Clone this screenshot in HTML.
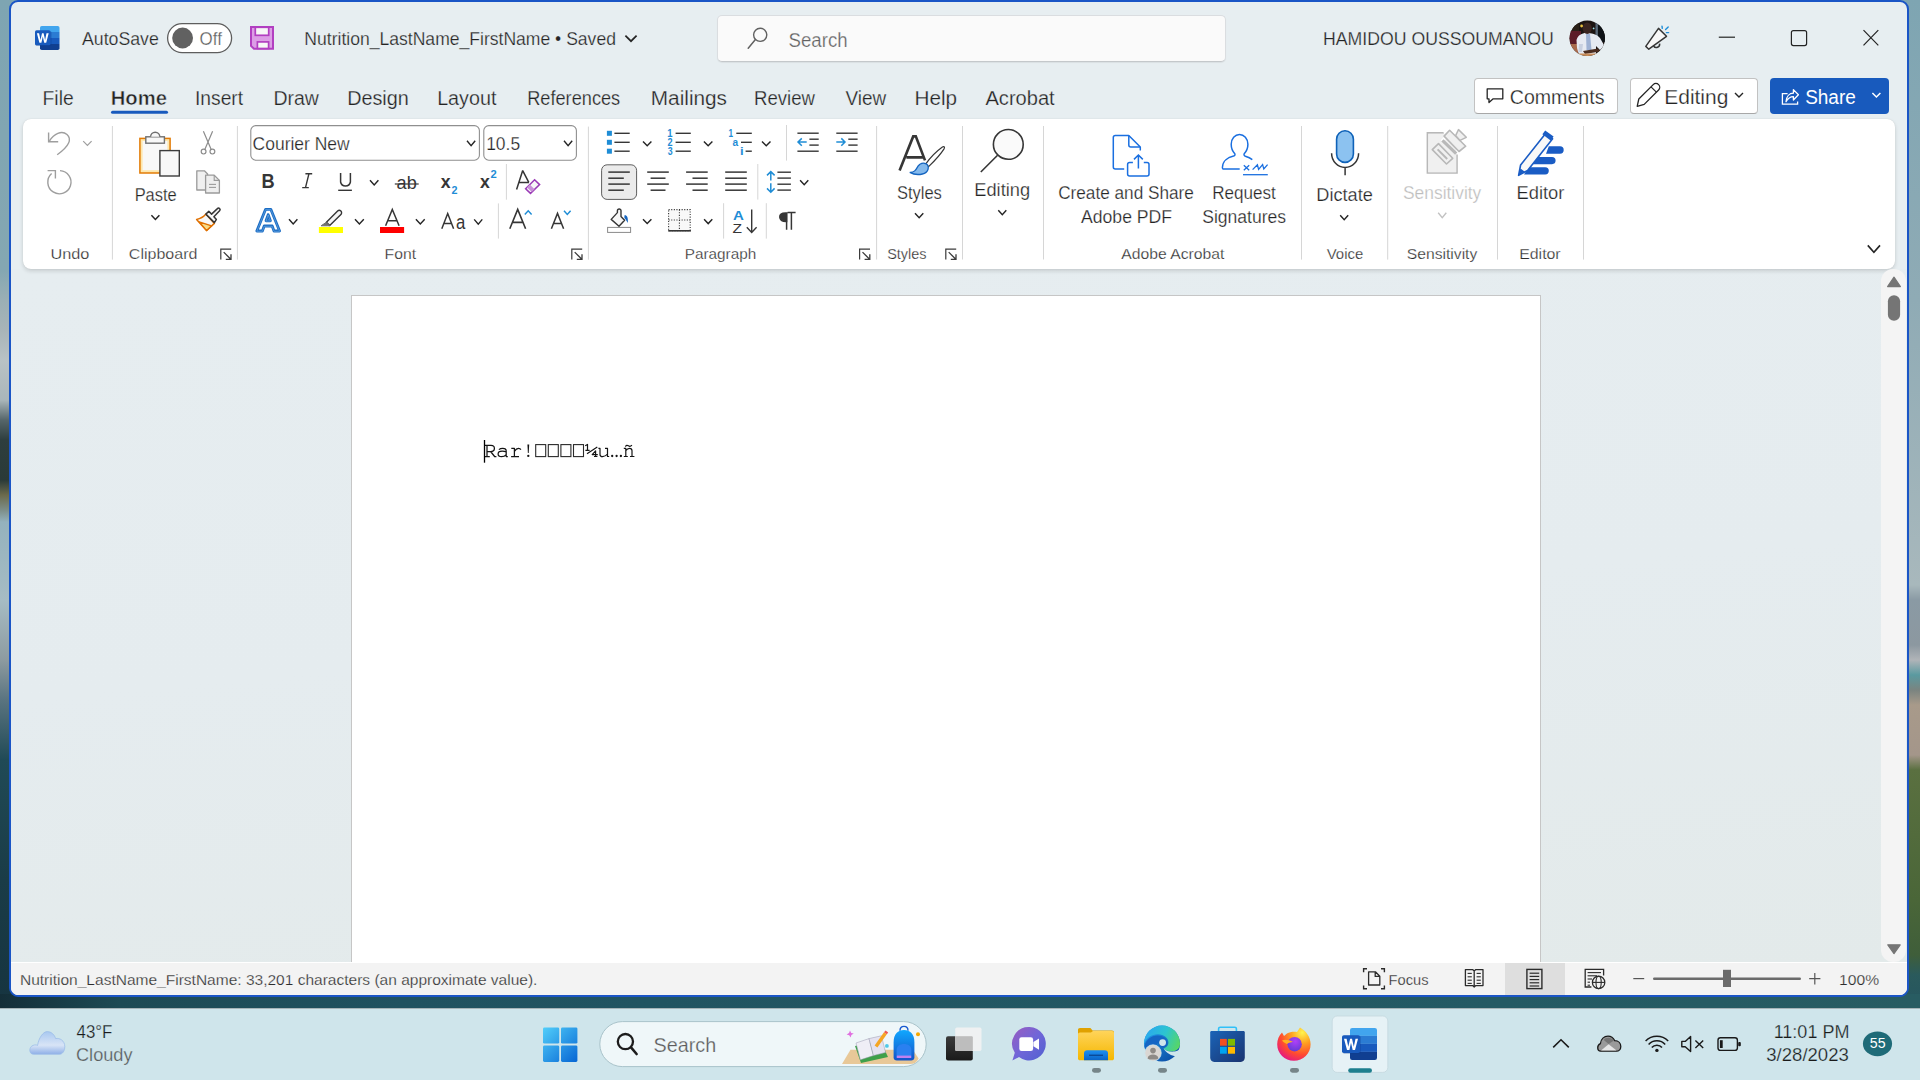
<!DOCTYPE html>
<html><head><meta charset="utf-8"><title>Word</title>
<style>
html,body{margin:0;padding:0;}
body{width:1920px;height:1080px;overflow:hidden;position:relative;font-family:"Liberation Sans",sans-serif;background:#1f4a55;}
svg text{white-space:pre;}
</style></head><body>
<div style="position:absolute;left:0;top:0;width:1920px;height:1008px;background:#7fa6b3"></div>
<div style="position:absolute;left:0;top:0;width:12px;height:1008px;background:linear-gradient(180deg,#7ea5b2 0px,#84a7b2 270px,#9aafb5 300px,#a8b4b8 330px,#b8c2c5 360px,#aab6ba 400px,#56666a 420px,#2e3e3e 440px,#2a3a38 480px,#6b6a4c 495px,#7d8e88 510px,#94b2bd 522px,#a6bcc4 600px,#8d9ba0 660px,#5a7480 700px,#204a56 760px,#1a3c47 880px,#163440 1008px)"></div>
<div style="position:absolute;left:1906px;top:0;width:14px;height:1008px;background:linear-gradient(180deg,#7ea5b2 0px,#8fabb5 300px,#a8b8bc 585px,#8a9aa4 600px,#8c98a0 645px,#b0b4b8 660px,#5a9aa0 675px,#7a8480 690px,#a89a8a 705px,#a4968a 755px,#5a7040 770px,#4a6638 900px,#3f5e3a 955px,#2a5a5c 975px,#255560 1008px)"></div>
<div style="position:absolute;left:0;top:994px;width:1920px;height:14px;background:linear-gradient(90deg,#142e38 0px,#1d4a54 120px,#205260 400px,#225662 900px,#245a64 1500px,#285c62 1920px)"></div>
<div style="position:absolute;left:9px;top:0px;width:1896px;height:993px;border:2px solid #1a55c6;border-radius:9px;background:#e7eef1;overflow:hidden"></div>
<div style="position:absolute;left:11px;top:269px;width:1896px;height:694px;background:linear-gradient(175deg,#e6edf0 0%,#e5ecef 50%,#e3eaea 100%)"></div>
<div style="position:absolute;left:11px;top:962px;width:1896px;height:33px;background:#f3f3f3;border-radius:0 0 8px 8px"></div>
<div style="position:absolute;left:717px;top:15px;width:507px;height:45px;background:#fafafa;border:1px solid #dadde0;border-bottom-color:#c4c8cb;border-radius:5px;box-shadow:0 1px 1px rgba(0,0,0,0.06)"></div>
<div style="position:absolute;left:23px;top:119px;width:1872px;height:150px;background:#ffffff;border-radius:8px;box-shadow:0 2px 4px rgba(0,0,0,0.14),0 0 1px rgba(0,0,0,0.12)"></div>
<div style="position:absolute;left:1474px;top:78px;width:142px;height:34px;background:#ffffff;border:1px solid #c2c2c2;border-bottom-color:#a8a8a8;border-radius:4px"></div>
<div style="position:absolute;left:1630px;top:78px;width:126px;height:34px;background:#ffffff;border:1px solid #c2c2c2;border-bottom-color:#a8a8a8;border-radius:4px"></div>
<div style="position:absolute;left:1770px;top:78px;width:119px;height:36px;background:#185abd;border-radius:4px"></div>
<div style="position:absolute;left:1881px;top:269px;width:25px;height:693px;background:#f4f4f4;border-radius:12px"></div>
<div style="position:absolute;left:351px;top:295px;width:1188px;height:667px;background:#ffffff;border:1px solid #c6c6c6;border-bottom:none"></div>
<div style="position:absolute;left:11px;top:962px;width:1896px;height:33px;background:#f3f3f3;border-top:1px solid #ffffff;box-sizing:border-box;border-radius:0 0 8px 8px"></div>
<div style="position:absolute;left:1505px;top:963px;width:60px;height:32px;background:#dedede"></div>
<div style="position:absolute;left:0;top:1008px;width:1920px;height:72px;background:#cfe5eb;border-top:1px solid #a6b4b8;box-sizing:border-box"></div>
<svg width="1920" height="1080" viewBox="0 0 1920 1080" style="position:absolute;left:0;top:0">
<rect x="111" y="110.8" width="57" height="3" rx="1.5" fill="#185abd"/>
<defs><clipPath id="wc1"><rect x="40" y="26" width="19.5" height="24" rx="1.8"/></clipPath></defs>
<g clip-path="url(#wc1)"><rect x="40" y="26" width="20" height="6" fill="#41a5ee"/><rect x="40" y="32" width="20" height="6" fill="#2b7cd3"/><rect x="40" y="38" width="20" height="6" fill="#185abd"/><rect x="40" y="44" width="20" height="6" fill="#103f91"/></g>
<rect x="35.5" y="31" width="16" height="15" rx="1.6" fill="#0b3a8c" opacity="0.35"/>
<rect x="35" y="30.3" width="15.5" height="15" rx="1.6" fill="#185abd"/>
<path d="M36.9,33.2 H39.1 L40.5,40 L42,33.2 H43.6 L45.1,40 L46.5,33.2 H48.7 L46.2,42.8 H44.2 L42.8,36.6 L41.4,42.8 H39.4 Z" fill="#fff"/>
<rect x="167.6" y="23.6" width="64" height="29" rx="14.5" fill="#ffffff" stroke="#5e5e5e" stroke-width="1.3"/>
<circle cx="182.6" cy="38" r="10.4" fill="#616161"/>
<path d="M250,26 H274 V49.8 H253.6 L250,46.2 Z" fill="#b23fc1"/>
<path d="M252,28 H272 V47.8 H254.4 L252,45.4 Z" fill="#dc9de6"/>
<rect x="255.3" y="27.3" width="13.4" height="8" fill="#f7f7f7" stroke="#b23fc1" stroke-width="1.7"/>
<rect x="257.4" y="41.9" width="11.2" height="6.6" fill="#f7f7f7" stroke="#b23fc1" stroke-width="1.7"/>
<polyline points="625.4,35.6 631,41.2 636.6,35.6" fill="none" stroke="#242424" stroke-width="1.7"/>
<circle cx="760.2" cy="34.8" r="6.6" fill="none" stroke="#616161" stroke-width="1.4"/><line x1="755.4" y1="39.6" x2="748.2" y2="48.2" stroke="#616161" stroke-width="1.5" stroke-linecap="round"/>
<defs><clipPath id="av"><circle cx="1587.3" cy="38.3" r="17.7"/></clipPath></defs>
<g clip-path="url(#av)"><rect x="1569" y="20" width="37" height="37" fill="#1c1412"/>
<rect x="1569" y="20" width="10" height="12" fill="#2a2018"/>
<rect x="1569" y="31" width="12" height="13" fill="#5c1c28"/>
<rect x="1569" y="44" width="9" height="13" fill="#a86a4c"/>
<rect x="1595.5" y="22" width="2.4" height="16" fill="#5a6878"/>
<rect x="1598" y="20" width="8" height="22" fill="#0e1216"/>
<path d="M1576.5,40 C1578,35 1582,33 1586,33 C1591,33 1597,34 1600,38 L1604.5,46 L1600,50 L1596,46 L1596,54 L1579,55 L1577,48 Z" fill="#e6eaf2"/>
<path d="M1586,34 L1590,34 L1591.5,50 L1586.5,50 Z" fill="#9fb2d4"/>
<path d="M1579,44 L1583,44 L1582,52 L1578.5,52 Z" fill="#c8d0e0"/>
<ellipse cx="1587.2" cy="28.2" rx="4.6" ry="5.8" fill="#3a2420"/>
<path d="M1583,51 L1598,48.5 L1600,51.5 L1585,54 Z" fill="#4a2c20"/>
<rect x="1569" y="53.5" width="37" height="4" fill="#c88c5a"/>
<circle cx="1581.6" cy="26" r="1.4" fill="#e8c040"/>
<circle cx="1593.6" cy="28.4" r="0.9" fill="#a0e0e8"/></g>
<path d="M1645.8,46.4 L1658.5,28.4 L1666.5,36.3 L1648.8,49.2 Z" fill="#f8f8f8" stroke="#363636" stroke-width="1.5" stroke-linejoin="round"/>
<path d="M1653.6,46 A3.3,3.3 0 0 0 1659.6,43.6" fill="none" stroke="#363636" stroke-width="1.5"/>
<line x1="1662" y1="26.2" x2="1662.3" y2="28.4" stroke="#1f8ed8" stroke-width="1.4" stroke-linecap="round"/>
<line x1="1665.6" y1="29.6" x2="1668.2" y2="27" stroke="#1f8ed8" stroke-width="1.4" stroke-linecap="round"/>
<line x1="1666.4" y1="32.6" x2="1668.6" y2="32.6" stroke="#1f8ed8" stroke-width="1.4" stroke-linecap="round"/>
<line x1="1718.8" y1="37.2" x2="1735" y2="37.2" stroke="#242424" stroke-width="1.2"/>
<rect x="1791.4" y="30.6" width="15.2" height="15" rx="2" fill="none" stroke="#242424" stroke-width="1.2"/>
<path d="M1863.5,30.2 L1878.3,45.4 M1878.3,30.2 L1863.5,45.4" stroke="#242424" stroke-width="1.2"/>
<path d="M1487.2,88.8 H1502.8 V98.8 H1493.2 L1489,102.6 V98.8 H1487.2 Z" fill="none" stroke="#242424" stroke-width="1.3" stroke-linejoin="round"/>
<path d="M1637.2,106.4 L1638.8,99 L1653.2,84.6 A2.6,2.6 0 0 1 1658.6,90 L1644.2,104.4 Z" fill="none" stroke="#242424" stroke-width="1.3" stroke-linejoin="round"/>
<line x1="1651" y1="86.8" x2="1656.4" y2="92.2" stroke="#242424" stroke-width="1.2"/>
<polyline points="1735,93 1739,97 1743,93" fill="none" stroke="#242424" stroke-width="1.4"/>
<path d="M1786,101.8 C1786.4,96.2 1789.6,93.2 1793.4,93.2 V89.6 L1798.4,94.8 L1793.4,100 V96.6 C1790.4,96.6 1787.8,98.4 1786,101.8 Z" fill="none" stroke="#fff" stroke-width="1.3" stroke-linejoin="round"/>
<path d="M1787.6,93.6 H1782.4 V104.2 H1797.6 V101.4" fill="none" stroke="#fff" stroke-width="1.3"/>
<polyline points="1872.4,93 1876.4,97 1880.4,93" fill="none" stroke="#fff" stroke-width="1.5"/>
<path d="M48.6,132.4 V141.8 H58.2" fill="none" stroke="#9e9e9e" stroke-width="1.4"/>
<path d="M49.4,141 C54,134 61.5,130 67,134.5 C72,139 69.5,146 57.2,154.8" fill="none" stroke="#9e9e9e" stroke-width="1.4"/>
<polyline points="83.2,141.2 87.4,145.4 91.6,141.2" fill="none" stroke="#9e9e9e" stroke-width="1.2"/>
<path d="M51.6,173.6 A11.6,11.6 0 1 0 60,170.6" fill="none" stroke="#9e9e9e" stroke-width="1.4"/>
<path d="M47.6,170.6 H55.4 V178.4" fill="none" stroke="#9e9e9e" stroke-width="1.4"/>
<line x1="112.4" y1="126" x2="112.4" y2="259.6" stroke="#d6d6d6" stroke-width="1"/>
<line x1="237.4" y1="126" x2="237.4" y2="259.6" stroke="#d6d6d6" stroke-width="1"/>
<line x1="588.4" y1="126.6" x2="588.4" y2="259.7" stroke="#d6d6d6" stroke-width="1"/>
<line x1="876.6" y1="126" x2="876.6" y2="259.5" stroke="#d6d6d6" stroke-width="1"/>
<line x1="962.5" y1="126" x2="962.5" y2="259.5" stroke="#d6d6d6" stroke-width="1"/>
<line x1="1043.5" y1="126" x2="1043.5" y2="259.5" stroke="#d6d6d6" stroke-width="1"/>
<line x1="1301.5" y1="126" x2="1301.5" y2="259.6" stroke="#d6d6d6" stroke-width="1"/>
<line x1="1387.7" y1="126" x2="1387.7" y2="259.6" stroke="#d6d6d6" stroke-width="1"/>
<line x1="1497.5" y1="126" x2="1497.5" y2="259.6" stroke="#d6d6d6" stroke-width="1"/>
<line x1="1583.5" y1="126" x2="1583.5" y2="259.6" stroke="#d6d6d6" stroke-width="1"/>
<rect x="139.9" y="138.4" width="30.2" height="34.6" fill="#fde7ad" stroke="#e27b06" stroke-width="1.5"/>
<rect x="142.6" y="141" width="24.8" height="29.2" fill="#f8f8f8"/>
<rect x="145.8" y="136.8" width="18.6" height="6.4" fill="#f8f8f8" stroke="#707070" stroke-width="1.4"/>
<path d="M150.6,136.8 A4.6,4.6 0 0 1 159.8,136.8" fill="#f8f8f8" stroke="#707070" stroke-width="1.4"/>
<rect x="159.9" y="150.6" width="19.4" height="25.4" fill="#f8f8f8" stroke="#3c3c3c" stroke-width="1.4"/>
<polyline points="151.4,215.2 155.4,219.4 159.4,215.2" fill="none" stroke="#242424" stroke-width="1.5"/>
<path d="M203.4,131.2 L211.4,150 M212.6,131.2 L204.6,150" fill="none" stroke="#8c8c8c" stroke-width="1.2"/>
<circle cx="203.6" cy="151.6" r="2.4" fill="none" stroke="#8c8c8c" stroke-width="1.2"/>
<circle cx="212.4" cy="151.6" r="2.4" fill="none" stroke="#8c8c8c" stroke-width="1.2"/>
<path d="M196.8,190 V170.8 H204.4 L207.6,174 V190 Z" fill="#f0f0f0" stroke="#9a9a9a" stroke-width="1.3" stroke-linejoin="round"/>
<path d="M205.6,193 V175.2 H214.2 L219.4,180.4 V193 Z" fill="#eeeeee" stroke="#9a9a9a" stroke-width="1.3" stroke-linejoin="round"/>
<path d="M214.2,175.2 V180.4 H219.4" fill="none" stroke="#9a9a9a" stroke-width="1.1"/>
<line x1="209" y1="184.4" x2="216" y2="184.4" stroke="#9a9a9a" stroke-width="1.1"/><line x1="209" y1="187.4" x2="216" y2="187.4" stroke="#9a9a9a" stroke-width="1.1"/>
<path d="M205.9,214.1 C203.5,217 200.5,218.8 196.6,219.4 L206.5,230.6 L214.4,223.4 Z" fill="#f8f8f8" stroke="#e07000" stroke-width="1.5" stroke-linejoin="round"/>
<path d="M199.2,221.8 L211.6,225.8 L206.5,230.4 Z" fill="#f8dc88" stroke="#e07000" stroke-width="1.3" stroke-linejoin="round"/>
<path d="M205.9,214.1 L208.8,211.3 L211.6,214.1 L217.4,208.6 A1.3,1.3 0 0 1 219.6,210.8 L213.9,216.7 L216.4,219.4 L214.4,222.6 Z" fill="#f8f8f8" stroke="#363636" stroke-width="1.5" stroke-linejoin="round"/>
<path d="M220.79999999999998,259.6 V249.2 H231.2" fill="none" stroke="#3b3b3b" stroke-width="1.2"/><path d="M223.7,252.1 L230.79999999999998,259.2 M231.0,254.2 V259.4 H225.79999999999998" fill="none" stroke="#3b3b3b" stroke-width="1.3"/>
<path d="M571.8000000000001,259.6 V249.2 H582.2" fill="none" stroke="#3b3b3b" stroke-width="1.2"/><path d="M574.7,252.1 L581.8000000000001,259.2 M582.0,254.2 V259.4 H576.8000000000001" fill="none" stroke="#3b3b3b" stroke-width="1.3"/>
<path d="M859.6,259.6 V249.2 H870" fill="none" stroke="#3b3b3b" stroke-width="1.2"/><path d="M862.5,252.1 L869.6,259.2 M869.8,254.2 V259.4 H864.6" fill="none" stroke="#3b3b3b" stroke-width="1.3"/>
<path d="M945.8000000000001,259.6 V249.2 H956.2" fill="none" stroke="#3b3b3b" stroke-width="1.2"/><path d="M948.7,252.1 L955.8000000000001,259.2 M956.0,254.2 V259.4 H950.8000000000001" fill="none" stroke="#3b3b3b" stroke-width="1.3"/>
<rect x="250.8" y="125.6" width="228.6" height="34.6" rx="5" fill="#fff" stroke="#8f8f8f" stroke-width="1.1"/>
<rect x="483.8" y="125.6" width="92.6" height="34.6" rx="5" fill="#fff" stroke="#8f8f8f" stroke-width="1.1"/>
<polyline points="467,140.8 471.1,145.6 475.2,140.8" fill="none" stroke="#242424" stroke-width="1.4"/>
<polyline points="564,140.8 568.1,145.6 572.2,140.8" fill="none" stroke="#242424" stroke-width="1.4"/>
<path d="M305.4,173.8 H312.2 M302.2,187.6 H308.8 M308.9,173.8 L305.5,187.6" fill="none" stroke="#363636" stroke-width="1.4"/>
<path d="M340.6,173 V182 A5,5 0 0 0 350.4,182 V173" fill="none" stroke="#363636" stroke-width="1.5"/><line x1="338.2" y1="190.3" x2="351.9" y2="190.3" stroke="#363636" stroke-width="1.4"/>
<polyline points="370,180.2 374.2,185 378.4,180.2" fill="none" stroke="#242424" stroke-width="1.4"/>
<line x1="394.8" y1="184" x2="418.7" y2="184" stroke="#363636" stroke-width="1.2"/>
<path d="M516.6,189.6 L522.7,170.6 L528.8,182.4 M519.4,182.4 H529" fill="none" stroke="#363636" stroke-width="1.5" stroke-linejoin="bevel"/>
<path d="M525.6,188.8 L534.6,179.8 L539.6,184.6 L530.5,193.4 Z" fill="#f6f6f6" stroke="#9a3ab6" stroke-width="1.5"/><path d="M527,187.4 L531.8,192 L534.6,189.2 L529.8,184.6 Z" fill="#c890d8"/>
<path d="M256.8,231 L265.6,209.3 H270.8 L279.6,231 H274 L272.2,226 H264.2 L262.4,231 Z M266,220.8 H270.4 L268.2,214.6 Z" fill="#ffffff" stroke="#1a6cc4" stroke-width="2.8" stroke-linejoin="round"/>
<path d="M256.8,231 L265.6,209.3 H270.8 L279.6,231 H274 L272.2,226 H264.2 L262.4,231 Z M266,220.8 H270.4 L268.2,214.6 Z" fill="none" stroke="#8cc0ee" stroke-width="0.6" opacity="0.8" transform="translate(0,0.3)"/>
<polyline points="289,219.2 293.2,224 297.4,219.2" fill="none" stroke="#242424" stroke-width="1.4"/>
<rect x="318.9" y="227" width="24.1" height="6" fill="#ffff00"/>
<path d="M326.4,222.3 L337.6,211.1 A2.1,2.1 0 0 1 340.9,214.4 L329.7,225.6 Z" fill="#f6f6f6" stroke="#363636" stroke-width="1.4" stroke-linejoin="round"/>
<path d="M326.2,222.4 L329.6,225.8 L327.4,225.8 L321,225.8 Z" fill="#707070" stroke="#707070" stroke-width="1"/>
<polyline points="355,219.2 359.4,224 363.8,219.2" fill="none" stroke="#242424" stroke-width="1.4"/>
<path d="M385.6,225.7 L392.3,209.4 L399.1,225.7 M387.6,220.8 H397" fill="none" stroke="#363636" stroke-width="1.5"/>
<rect x="380" y="227" width="24.1" height="6" fill="#ff0000"/>
<polyline points="415.9,219.2 420.29999999999995,224 424.7,219.2" fill="none" stroke="#242424" stroke-width="1.4"/>
<path d="M441.8,228.8 L447.7,213.6 L453.6,228.8 M443.8,223.6 H451.6" fill="none" stroke="#363636" stroke-width="1.5"/>
<polyline points="474.2,219.4 478.25,224.2 482.3,219.4" fill="none" stroke="#242424" stroke-width="1.4"/>
<path d="M509.8,228.8 L517.7,209.4 L525.6,228.8 M512.4,222.4 H523" fill="none" stroke="#363636" stroke-width="1.6"/>
<polyline points="524.8,214.4 528.2,210.8 531.6,214.4" fill="none" stroke="#1f8dd6" stroke-width="1.5"/>
<path d="M551.4,228.8 L557.5,213.4 L563.6,228.8 M553.4,223.6 H561.6" fill="none" stroke="#363636" stroke-width="1.5"/>
<polyline points="564,210.8 567.3,214.4 570.6,210.8" fill="none" stroke="#1f8dd6" stroke-width="1.5"/>
<line x1="506.4" y1="164" x2="506.4" y2="199.7" stroke="#d6d6d6" stroke-width="1"/>
<line x1="498.4" y1="203.4" x2="498.4" y2="238.6" stroke="#d6d6d6" stroke-width="1"/>
<line x1="786.5" y1="125" x2="786.5" y2="160.6" stroke="#d6d6d6" stroke-width="1"/>
<line x1="757.8" y1="164" x2="757.8" y2="199.6" stroke="#d6d6d6" stroke-width="1"/>
<line x1="723.6" y1="203.2" x2="723.6" y2="238.6" stroke="#d6d6d6" stroke-width="1"/>
<line x1="766.3" y1="203.2" x2="766.3" y2="238.6" stroke="#d6d6d6" stroke-width="1"/>
<rect x="606.9" y="130.8" width="5" height="5" fill="#1f8dd6"/><line x1="614.4" y1="133.3" x2="629.7" y2="133.3" stroke="#363636" stroke-width="1.4"/>
<line x1="675.6" y1="133.3" x2="690.8" y2="133.3" stroke="#363636" stroke-width="1.4"/>
<rect x="606.9" y="139.8" width="5" height="5" fill="#1f8dd6"/><line x1="614.4" y1="142.3" x2="629.7" y2="142.3" stroke="#363636" stroke-width="1.4"/>
<line x1="675.6" y1="142.3" x2="690.8" y2="142.3" stroke="#363636" stroke-width="1.4"/>
<rect x="606.9" y="148.7" width="5" height="5" fill="#1f8dd6"/><line x1="614.4" y1="151.2" x2="629.7" y2="151.2" stroke="#363636" stroke-width="1.4"/>
<line x1="675.6" y1="151.2" x2="690.8" y2="151.2" stroke="#363636" stroke-width="1.4"/>
<polyline points="643,141.4 647.2,145.8 651.4,141.4" fill="none" stroke="#242424" stroke-width="1.4"/>
<polyline points="703.9,141.4 708.15,145.8 712.4,141.4" fill="none" stroke="#242424" stroke-width="1.4"/>
<line x1="736.3" y1="133.3" x2="751.8" y2="133.3" stroke="#363636" stroke-width="1.4"/><line x1="741" y1="142.3" x2="751.8" y2="142.3" stroke="#363636" stroke-width="1.4"/><line x1="745.6" y1="151.2" x2="751.8" y2="151.2" stroke="#363636" stroke-width="1.4"/>
<polyline points="762,141.4 766.25,145.8 770.5,141.4" fill="none" stroke="#242424" stroke-width="1.4"/>
<line x1="797.4" y1="133.2" x2="818.6999999999999" y2="133.2" stroke="#363636" stroke-width="1.4"/><line x1="797.4" y1="151.2" x2="818.6999999999999" y2="151.2" stroke="#363636" stroke-width="1.4"/>
<line x1="809.4" y1="139.2" x2="818.6999999999999" y2="139.2" stroke="#363636" stroke-width="1.4"/><line x1="809.4" y1="145.1" x2="818.6999999999999" y2="145.1" stroke="#363636" stroke-width="1.4"/>
<path d="M798.0,142 H806.6999999999999 M801.8,138.4 L798.0,142 L801.8,145.8" fill="none" stroke="#1f8dd6" stroke-width="1.5"/>
<line x1="836.3" y1="133.2" x2="857.5999999999999" y2="133.2" stroke="#363636" stroke-width="1.4"/><line x1="836.3" y1="151.2" x2="857.5999999999999" y2="151.2" stroke="#363636" stroke-width="1.4"/>
<line x1="848.3" y1="139.2" x2="857.5999999999999" y2="139.2" stroke="#363636" stroke-width="1.4"/><line x1="848.3" y1="145.1" x2="857.5999999999999" y2="145.1" stroke="#363636" stroke-width="1.4"/>
<path d="M836.3,142 H844.9 M841.3,138.4 L845.0,142 L841.3,145.8" fill="none" stroke="#1f8dd6" stroke-width="1.5"/>
<rect x="601.6" y="164.8" width="35" height="34.6" rx="5.5" fill="#ebebeb" stroke="#5e5e5e" stroke-width="1"/>
<line x1="608.3" y1="172.1" x2="629.8" y2="172.1" stroke="#363636" stroke-width="1.5"/>
<line x1="608.3" y1="178.2" x2="623.8" y2="178.2" stroke="#363636" stroke-width="1.5"/>
<line x1="608.3" y1="184.1" x2="629.8" y2="184.1" stroke="#363636" stroke-width="1.5"/>
<line x1="608.3" y1="190.2" x2="623.8" y2="190.2" stroke="#363636" stroke-width="1.5"/>
<line x1="647.2" y1="172.1" x2="668.8" y2="172.1" stroke="#363636" stroke-width="1.5"/>
<line x1="650.6" y1="178.2" x2="665.5" y2="178.2" stroke="#363636" stroke-width="1.5"/>
<line x1="647.2" y1="184.1" x2="668.8" y2="184.1" stroke="#363636" stroke-width="1.5"/>
<line x1="650.6" y1="190.2" x2="665.5" y2="190.2" stroke="#363636" stroke-width="1.5"/>
<line x1="686.1" y1="172.1" x2="707.7" y2="172.1" stroke="#363636" stroke-width="1.5"/>
<line x1="692.5" y1="178.2" x2="707.7" y2="178.2" stroke="#363636" stroke-width="1.5"/>
<line x1="686.1" y1="184.1" x2="707.7" y2="184.1" stroke="#363636" stroke-width="1.5"/>
<line x1="692.5" y1="190.2" x2="707.7" y2="190.2" stroke="#363636" stroke-width="1.5"/>
<line x1="725.2" y1="172.1" x2="746.8" y2="172.1" stroke="#363636" stroke-width="1.5"/>
<line x1="725.2" y1="178.2" x2="746.8" y2="178.2" stroke="#363636" stroke-width="1.5"/>
<line x1="725.2" y1="184.1" x2="746.8" y2="184.1" stroke="#363636" stroke-width="1.5"/>
<line x1="725.2" y1="190.2" x2="746.8" y2="190.2" stroke="#363636" stroke-width="1.5"/>
<line x1="777.4" y1="172.2" x2="790.9" y2="172.2" stroke="#363636" stroke-width="1.4"/>
<line x1="777.4" y1="178.1" x2="790.9" y2="178.1" stroke="#363636" stroke-width="1.4"/>
<line x1="777.4" y1="184.2" x2="790.9" y2="184.2" stroke="#363636" stroke-width="1.4"/>
<line x1="777.4" y1="190.1" x2="790.9" y2="190.1" stroke="#363636" stroke-width="1.4"/>
<path d="M770.8,172 V180.6 M767,175.4 L770.8,171.6 L774.6,175.4 M770.8,183.3 V191.8 M767,188.4 L770.8,192.2 L774.6,188.4" fill="none" stroke="#1f8dd6" stroke-width="1.5"/>
<polyline points="800.1,180.2 804.2,184.8 808.3,180.2" fill="none" stroke="#242424" stroke-width="1.4"/>
<rect x="607.6" y="227.4" width="23" height="5" fill="#fff" stroke="#8a8a8a" stroke-width="1"/>
<path d="M611.2,219.4 L617.4,212.6 V210.8 A1.8,1.8 0 0 1 621,210.8 V216.4 L624.6,220.2 L619,226.2 Z" fill="#f8f8f8" stroke="#363636" stroke-width="1.4" stroke-linejoin="round"/>
<path d="M624.4,215.4 C626.5,214.8 628.4,216.8 627.8,223 C626.6,221 625.8,219 624.4,218 Z" fill="#1565c0"/>
<polyline points="643,219.2 647.2,223.6 651.4,219.2" fill="none" stroke="#242424" stroke-width="1.4"/>
<rect x="668.6" y="209.6" width="21.6" height="21" fill="#f8f8f8" stroke="#363636" stroke-width="1.1" stroke-dasharray="1.1,1.5"/>
<path d="M679.4,209.6 V230.6 M668.6,220 H690.2" stroke="#363636" stroke-width="1.1" stroke-dasharray="1.1,1.5"/><line x1="668.2" y1="230.8" x2="690.8" y2="230.8" stroke="#363636" stroke-width="1.6"/>
<polyline points="704.1,219.2 708.2,223.6 712.3,219.2" fill="none" stroke="#242424" stroke-width="1.4"/>
<path d="M751.7,209.4 V232 M746.8,227.2 L751.7,232.4 L756.6,227.2" fill="none" stroke="#363636" stroke-width="1.4"/>
<path d="M787.6,212.6 H795.6 M786.6,213 V229.8 M791.4,213 V229.8 M786.8,213 C781,212.6 779.6,215 779.8,217.2 C780,220 782.4,221.8 786.8,221.6 Z" fill="#363636" stroke="#363636" stroke-width="1.5"/>
<path d="M899.6,170.6 L913.2,136.4 H915.8 L925,160.4 M906.4,157.4 H923.6" fill="none" stroke="#363636" stroke-width="2.6" stroke-linejoin="miter"/>
<path d="M925.8,163.8 C930,158 936.6,151.2 942.4,147 C943.8,146 945,147 944.2,148.6 C940.6,154.4 933.6,161.8 928.6,166.6 Z" fill="#fff" stroke="#363636" stroke-width="1.2" stroke-linejoin="round"/>
<path d="M926.2,163.8 C930,166.8 928.4,172.6 922.4,174 C918,175 913,174.2 909.8,172.4 C914.6,172.6 916,169.6 918,166.2 C919.8,163.4 923.2,162.4 926.2,163.8 Z" fill="#84b9ec" stroke="#1565c0" stroke-width="1.3"/>
<polyline points="915,213.2 919.15,217.8 923.3,213.2" fill="none" stroke="#242424" stroke-width="1.4"/>
<circle cx="1008.3" cy="144.4" r="14.9" fill="#fafafa" stroke="#363636" stroke-width="1.6"/><line x1="997.6" y1="155.2" x2="980.8" y2="172" stroke="#363636" stroke-width="1.6"/>
<polyline points="998.3,210.2 1002.3,214.8 1006.3,210.2" fill="none" stroke="#242424" stroke-width="1.4"/>
<path d="M1124.2,169.1 H1115.3 A2,2 0 0 1 1113.3,167.1 V137.5 A2,2 0 0 1 1115.3,135.5 H1128.8 L1140.3,147 V150.4" fill="none" stroke="#1a6fe0" stroke-width="1.5" stroke-linejoin="round"/>
<path d="M1128.8,135.8 V145 A2,2 0 0 0 1130.8,147 H1140" fill="none" stroke="#1a6fe0" stroke-width="1.5"/>
<path d="M1132.9,162.6 H1129.6 A2,2 0 0 0 1127.6,164.6 V174 A2,2 0 0 0 1129.6,176 H1147 A2,2 0 0 0 1149,174 V164.6 A2,2 0 0 0 1147,162.6 H1143.8" fill="none" stroke="#1a6fe0" stroke-width="1.5"/>
<path d="M1138.4,168.6 V155.2 M1134,159.4 L1138.4,155 L1142.8,159.4" fill="none" stroke="#1a6fe0" stroke-width="1.5"/>
<path d="M1239.7,169.1 H1223.8 A1.4,1.4 0 0 1 1222.4,167.6 C1222.6,161 1228,157.2 1233.6,156 C1235,155.6 1235.4,154.4 1234.6,153.4 C1232.4,151 1231.2,148 1231.2,144.2 C1231.2,138.6 1235,134.4 1239.5,134.4 C1244,134.4 1247.9,138.6 1247.9,144.2 C1247.9,148 1246.6,151 1244.4,153.4 C1243.6,154.4 1244,155.6 1245.4,156.2 C1247.8,157 1250.2,158 1252.3,159.6" fill="none" stroke="#1a6fe0" stroke-width="1.5" stroke-linejoin="round"/>
<path d="M1243.8,165.2 L1249.2,170.2 M1249.2,165.2 L1243.8,170.2 M1252.6,169.6 L1257.4,164.8 L1258.6,169.4 L1262.6,164.6 L1263.8,169 L1267.6,164.6" fill="none" stroke="#1a6fe0" stroke-width="1.3"/>
<line x1="1243" y1="174.7" x2="1267.8" y2="174.7" stroke="#1a6fe0" stroke-width="1.3"/>
<rect x="1336.6" y="130.8" width="16.8" height="31.6" rx="8.4" fill="#8cc2f0" stroke="#0f62b8" stroke-width="1.6"/>
<path d="M1331.6,153.2 A13.5,14.2 0 0 0 1358.6,153.2 M1345.1,168 V175.2" fill="none" stroke="#363636" stroke-width="1.5"/>
<polyline points="1340.2,215.2 1344.2,219.8 1348.2,215.2" fill="none" stroke="#242424" stroke-width="1.4"/>
<path d="M1443.6,132.9 H1427.4 V173 H1457 V154.4" fill="#f0f0f0" stroke="#b8b8b8" stroke-width="1.6"/>
<path d="M1428.2,133.7 H1443 L1456.2,147 V172.2 H1428.2 Z" fill="#f0f0f0"/>
<path d="M1432.3,149.6 L1438.5,143.6 L1452.7,158.3 L1446.5,164 Z" fill="#f0f0f0" stroke="#b8b8b8" stroke-width="1.6" stroke-linejoin="round"/>
<line x1="1437.6" y1="149.4" x2="1447.2" y2="159" stroke="#b8b8b8" stroke-width="2"/>
<path d="M1441.6,141.2 L1449.6,133.4" stroke="#ffffff" stroke-width="3"/>
<path d="M1444.1,136.1 L1449.6,130.3 L1465.7,146.2 L1459,151.5 Z" fill="#f0f0f0" stroke="#b8b8b8" stroke-width="1.6" stroke-linejoin="round"/>
<path d="M1442.4,140.4 L1456.2,153.6" stroke="#b8b8b8" stroke-width="3.2"/>
<path d="M1455.6,135.6 L1458.5,129.6 L1466.3,137.3 L1460,140.4 Z" fill="#f0f0f0" stroke="#b8b8b8" stroke-width="1.5" stroke-linejoin="round"/>
<polyline points="1438.2,212.8 1442.25,217.6 1446.3,212.8" fill="none" stroke="#c2c2c2" stroke-width="1.4"/>
<path d="M1548.8,146.3 H1560 A3.7,3.7 0 0 1 1560,153.7 H1546 Z M1536.7,157 H1552 A3.6,3.6 0 0 1 1552,164.2 H1532 Z M1528.5,167.2 H1545.2 A3.6,3.6 0 0 1 1545.2,174.4 H1524 Z" fill="#1a5cc4"/>
<path d="M1518.6,175.4 L1520.6,165 L1545.6,133.4 L1552.6,138.8 L1527.6,170.4 Z" fill="#f8f8f8" stroke="#1a5cc4" stroke-width="1.6" stroke-linejoin="round"/>
<path d="M1545.2,130.6 L1553.6,136.6 L1550.6,140.4 L1542.4,134.2 Z" fill="#1a5cc4"/><path d="M1518.6,175.4 L1520.4,168.4 L1524.6,171.6 Z" fill="#1a5cc4"/>
<polyline points="1867.8,245.4 1873.9,252.4 1880,245.4" fill="none" stroke="#242424" stroke-width="1.6"/>
<path d="M484.7,445.4 H491 C493.2,445.4 494.4,446.8 494.4,448.4 C494.4,450.2 493,451.5 490.6,451.5 H487 M487,445.4 V456.5 M484.7,456.5 H489.8 M490.6,451.5 L494.6,456.5 H496.4 M498.9,449.6 C500,448.6 501.4,448.3 502.8,448.3 C505,448.3 506.2,449.2 506.2,451 V456.5 H507.8 M506.2,452 C505,451.4 503.8,451.2 502.2,451.2 C499.6,451.2 498.1,452.6 498.1,454 C498.1,455.6 499.4,456.7 501.6,456.7 C503.4,456.7 505,456 506.2,454.6 M511.3,448.4 H514.4 V456.5 M511.1,456.5 H519 M514.4,451.4 C515.6,449.4 517,448.3 518.6,448.3 C519.6,448.3 520.4,448.8 520.9,449.6" fill="none" stroke="#141414" stroke-width="1.25" stroke-linejoin="round"/>
<path d="M527.4,444.4 H529.2 L528.7,452.9 H527.9 Z" fill="#141414"/><circle cx="528.3" cy="455.9" r="1.15" fill="#141414"/>
<rect x="535.70" y="444.6" width="10" height="12" fill="none" stroke="#2a2a2a" stroke-width="1.1"/>
<rect x="548.30" y="444.6" width="10" height="12" fill="none" stroke="#2a2a2a" stroke-width="1.1"/>
<rect x="560.90" y="444.6" width="10" height="12" fill="none" stroke="#2a2a2a" stroke-width="1.1"/>
<rect x="573.50" y="444.6" width="10" height="12" fill="none" stroke="#2a2a2a" stroke-width="1.1"/>
<path d="M585.2,445.8 L587.5,444.4 V450.4 M585.4,450.4 H589.6 M587,453.7 L597.3,447.1 M595.6,456.5 V450.8 L592.2,454.6 H597.8 M594,456.5 H597.4 M598.4,448.4 H600 V454.4 C600,455.8 601,456.6 602.6,456.6 C604.6,456.6 606.4,455.4 607.5,454 M605,448.4 H607.5 V456.5 H609.2 M623.8,448.4 H625.8 V456.5 M623.8,456.5 H627.8 M625.8,450.6 C626.8,449.2 628,448.3 629.6,448.3 C631.2,448.3 632,449.2 632,450.8 V456.5 M630,456.5 H634.4 M625.4,446.6 C626.2,445.2 627.2,445 628.4,445.8 C629.6,446.6 630.8,446.4 631.9,445.1" fill="none" stroke="#141414" stroke-width="1.2" stroke-linejoin="round"/>
<circle cx="612.2" cy="456" r="1.15" fill="#141414"/>
<circle cx="616.6" cy="456" r="1.15" fill="#141414"/>
<circle cx="620.9" cy="456" r="1.15" fill="#141414"/>
<line x1="484.5" y1="440" x2="484.5" y2="462.7" stroke="#000" stroke-width="1.3"/>
<path d="M1894,277.2 L1900.4,286.6 H1887.6 Z" fill="#757575" stroke="#757575" stroke-width="1.2" stroke-linejoin="round"/>
<rect x="1887.9" y="295.2" width="12.2" height="25.6" rx="6.1" fill="#757575"/>
<path d="M1887.8,944.8 H1900.2 L1894,953.6 Z" fill="#757575" stroke="#757575" stroke-width="1.2" stroke-linejoin="round"/>
<path d="M1363.6,972.2 V968.8 H1367 M1381,968.8 H1384.4 V972.2 M1384.4,985.4 V988.8 H1381 M1367,988.8 H1363.6 V985.4" fill="none" stroke="#2b2b2b" stroke-width="1.4"/>
<path d="M1368.6,985 V971.8 H1375.4 L1379.8,976.2 V985 Z M1375.2,972 V976.4 H1379.6" fill="none" stroke="#2b2b2b" stroke-width="1.3" stroke-linejoin="round"/>
<path d="M1465.4,969.6 H1472.6 L1474.2,971 L1475.8,969.6 H1483 V985.6 H1475.8 L1474.2,987 L1472.6,985.6 H1465.4 Z M1474.2,971 V987" fill="none" stroke="#2b2b2b" stroke-width="1.3" stroke-linejoin="round"/>
<line x1="1467.6" y1="973.4" x2="1471.8" y2="973.4" stroke="#2b2b2b" stroke-width="1.1"/><line x1="1476.6" y1="973.4" x2="1480.8" y2="973.4" stroke="#2b2b2b" stroke-width="1.1"/>
<line x1="1467.6" y1="976.8" x2="1471.8" y2="976.8" stroke="#2b2b2b" stroke-width="1.1"/><line x1="1476.6" y1="976.8" x2="1480.8" y2="976.8" stroke="#2b2b2b" stroke-width="1.1"/>
<line x1="1467.6" y1="980.2" x2="1471.8" y2="980.2" stroke="#2b2b2b" stroke-width="1.1"/><line x1="1476.6" y1="980.2" x2="1480.8" y2="980.2" stroke="#2b2b2b" stroke-width="1.1"/>
<line x1="1467.6" y1="983.4" x2="1471.8" y2="983.4" stroke="#2b2b2b" stroke-width="1.1"/><line x1="1476.6" y1="983.4" x2="1480.8" y2="983.4" stroke="#2b2b2b" stroke-width="1.1"/>
<rect x="1526.9" y="969.4" width="15" height="19.2" fill="none" stroke="#2b2b2b" stroke-width="1.4"/>
<line x1="1529.6" y1="973.2" x2="1539.2" y2="973.2" stroke="#2b2b2b" stroke-width="1.2"/>
<line x1="1529.6" y1="976.4" x2="1539.2" y2="976.4" stroke="#2b2b2b" stroke-width="1.2"/>
<line x1="1529.6" y1="979.6" x2="1539.2" y2="979.6" stroke="#2b2b2b" stroke-width="1.2"/>
<line x1="1529.6" y1="982.8" x2="1539.2" y2="982.8" stroke="#2b2b2b" stroke-width="1.2"/>
<line x1="1529.6" y1="986" x2="1539.2" y2="986" stroke="#2b2b2b" stroke-width="1.2"/>
<path d="M1591.4,987 H1585.2 V969.4 H1603.6 V975.4" fill="none" stroke="#2b2b2b" stroke-width="1.3"/>
<line x1="1587.6" y1="972.6" x2="1601" y2="972.6" stroke="#2b2b2b" stroke-width="1.1"/>
<line x1="1587.6" y1="975.8" x2="1597" y2="975.8" stroke="#2b2b2b" stroke-width="1.1"/>
<line x1="1587.6" y1="979" x2="1592" y2="979" stroke="#2b2b2b" stroke-width="1.1"/>
<line x1="1587.6" y1="982.2" x2="1590" y2="982.2" stroke="#2b2b2b" stroke-width="1.1"/>
<line x1="1587.6" y1="985.2" x2="1590" y2="985.2" stroke="#2b2b2b" stroke-width="1.1"/>
<circle cx="1598.6" cy="982.4" r="6.2" fill="#f3f3f3" stroke="#2b2b2b" stroke-width="1.3"/><ellipse cx="1598.6" cy="982.4" rx="2.6" ry="6.2" fill="none" stroke="#2b2b2b" stroke-width="1.1"/><line x1="1592.4" y1="982.4" x2="1604.8" y2="982.4" stroke="#2b2b2b" stroke-width="1.1"/>
<line x1="1633.3" y1="978.6" x2="1644.2" y2="978.6" stroke="#555" stroke-width="1.2"/>
<rect x="1653" y="977.6" width="148" height="2.4" rx="1.2" fill="#6b6b6b"/>
<rect x="1723" y="969.8" width="8" height="17.2" fill="#6b6b6b"/>
<path d="M1809.2,978.6 H1820.4 M1814.8,973 V984.4" stroke="#555" stroke-width="1.2"/>
<defs><linearGradient id="cld" x1="0" y1="0" x2="0" y2="1"><stop offset="0" stop-color="#a8c8f0"/><stop offset="0.6" stop-color="#d8e4f6"/><stop offset="1" stop-color="#8fb0e8"/></linearGradient></defs>
<path d="M33.4,1054.2 C29.4,1054.2 28.8,1048.6 31.4,1046.4 C33.4,1044.6 36.2,1044.6 37.6,1045.4 C38.6,1038.2 43,1031.6 47.2,1031.6 C51.6,1031.6 54.6,1035 55.6,1038.6 C59.6,1037.6 64.8,1040.6 64.8,1046.6 C64.8,1050.8 62.6,1054.2 59.8,1054.2 Z" fill="url(#cld)" stroke="#9cbce8" stroke-width="0.8"/>
<defs><linearGradient id="wl" gradientUnits="userSpaceOnUse" x1="543" y1="1027" x2="577" y2="1062"><stop offset="0" stop-color="#52cffa"/><stop offset="1" stop-color="#0766d4"/></linearGradient></defs>
<g fill="url(#wl)"><rect x="543" y="1027.4" width="16.2" height="16.2" rx="1.4"/><rect x="561" y="1027.4" width="16.4" height="16.2" rx="1.4"/><rect x="543" y="1045.4" width="16.2" height="16.6" rx="1.4"/><rect x="561" y="1045.4" width="16.4" height="16.6" rx="1.4"/></g>
<rect x="599.8" y="1021.6" width="326.4" height="45" rx="22.5" fill="#eff7f9" stroke="#a9c3ca" stroke-width="1"/>
<circle cx="625.4" cy="1041.6" r="7.6" fill="none" stroke="#1c1c1c" stroke-width="2.3"/><line x1="631" y1="1047.4" x2="636.6" y2="1054" stroke="#1c1c1c" stroke-width="2.6" stroke-linecap="round"/>
<path d="M842,1064 L850.5,1049.8 H912.8 L918.6,1058.4 C917,1062 914,1064 910,1064 Z" fill="#e8c898"/>
<path d="M855,1046 L880,1040 L888,1057 L861,1063 Z" fill="#3fa04a"/>
<path d="M856,1043 L869,1038.6 L873.4,1055.6 L860.4,1059.8 Z" fill="#efeef6" stroke="#9a9ab0" stroke-width="0.5"/>
<path d="M869,1038.6 L881.4,1035.8 L885.6,1052.4 L873.4,1055.6 Z" fill="#e4e2f0" stroke="#9a9ab0" stroke-width="0.5"/>
<path d="M874.6,1045.6 L884,1032.2 L886.8,1034.2 L877.4,1047.6 Z" fill="#f5a623"/><path d="M884,1032.2 L885.6,1030.4 L888.2,1032.4 L886.8,1034.2 Z" fill="#f05a50"/>
<path d="M850,1030.4 L851.2,1033 L853.8,1033.6 L851.4,1035 L850.6,1037.6 L849.2,1035.2 L846.6,1034.4 L849,1033 Z" fill="#e070e0"/>
<circle cx="886.9" cy="1045.9" r="1.9" fill="#50c8e8"/><circle cx="918" cy="1034.2" r="2" fill="#f5a800"/>
<defs><linearGradient id="bp" x1="0" y1="0" x2="0" y2="1"><stop offset="0" stop-color="#10a8ff"/><stop offset="1" stop-color="#1452c8"/></linearGradient></defs>
<path d="M900,1030.8 C900,1027.8 902,1026.4 904,1026.4 C906,1026.4 908,1027.8 908,1030.8" fill="none" stroke="#1a5ad0" stroke-width="1.4"/>
<path d="M893.6,1042 C893.6,1034 898,1030 904,1030 C910,1030 914.4,1034 914.4,1042 V1057.6 C914.4,1059.4 913,1060.6 911.2,1060.6 H896.8 C895,1060.6 893.6,1059.4 893.6,1057.6 Z" fill="url(#bp)"/>
<path d="M896.6,1050 C896.6,1046 900,1044 904,1044 C908,1044 911.4,1046 911.4,1050 V1057.8 H896.6 Z" fill="#2a80f0"/><rect x="896.8" y="1055.6" width="14.4" height="2.4" fill="#c080f0"/>
<defs><linearGradient id="tv1" x1="0" y1="0" x2="0" y2="1"><stop offset="0" stop-color="#3a3a3a"/><stop offset="1" stop-color="#1a1a1a"/></linearGradient></defs>
<rect x="946" y="1036.3" width="26.8" height="24.2" rx="2" fill="url(#tv1)"/>
<rect x="955.2" y="1027.6" width="26.3" height="23.3" rx="1.6" fill="#f2f2f2" opacity="0.92"/>
<rect x="955.2" y="1036.3" width="17.6" height="14.6" rx="1" fill="#bdbdbd"/>
<defs><linearGradient id="tm" x1="0" y1="0" x2="1" y2="1"><stop offset="0" stop-color="#9a5cc0"/><stop offset="0.5" stop-color="#7066d8"/><stop offset="1" stop-color="#5060d0"/></linearGradient></defs>
<path d="M1029.5,1027 A16.7,16.7 0 1 1 1019,1057 L1012.4,1060.6 L1014.8,1052.8 A16.7,16.7 0 0 1 1029.5,1027 Z" fill="url(#tm)"/>
<rect x="1019.3" y="1037.2" width="13.8" height="13.8" rx="2.2" fill="#ffffff"/><path d="M1033.4,1042 L1039,1038.4 V1049.8 L1033.4,1046.2 Z" fill="#ffffff"/>
<defs><linearGradient id="fx" x1="0" y1="0" x2="0" y2="1"><stop offset="0" stop-color="#ffd45a"/><stop offset="1" stop-color="#f5b700"/></linearGradient>
<linearGradient id="fxb" x1="0" y1="0" x2="0" y2="1"><stop offset="0" stop-color="#1e90f0"/><stop offset="1" stop-color="#0a64c8"/></linearGradient></defs>
<path d="M1078,1030 C1078,1028.8 1078.8,1028.1 1080,1028.1 H1090.4 L1092.6,1030.6 H1112 C1113.2,1030.6 1114,1031.4 1114,1032.6 V1035 H1078 Z" fill="#e0a100"/>
<path d="M1078,1034.4 C1078,1033.4 1078.8,1032.6 1080,1032.6 H1091 L1093,1031 H1112 C1113.2,1031 1114,1031.8 1114,1033 V1058.4 C1114,1059.4 1113.2,1060.2 1112,1060.2 H1080 C1078.8,1060.2 1078,1059.4 1078,1058.4 Z" fill="url(#fx)"/>
<path d="M1084,1060.2 V1053 C1084,1051.4 1085.4,1050.2 1087,1050.2 H1105 C1106.6,1050.2 1108,1051.4 1108,1053 V1060.2 Z" fill="url(#fxb)"/>
<rect x="1089" y="1054.6" width="14" height="1.4" fill="#0a4a98"/>
<defs><linearGradient id="eg1" gradientUnits="userSpaceOnUse" x1="1146" y1="1030" x2="1180" y2="1046"><stop offset="0" stop-color="#2aa8f0"/><stop offset="0.5" stop-color="#2cc4d0"/><stop offset="1" stop-color="#5ad85e"/></linearGradient>
<linearGradient id="eg2" gradientUnits="userSpaceOnUse" x1="1150" y1="1036" x2="1170" y2="1062"><stop offset="0" stop-color="#1e8ee0"/><stop offset="1" stop-color="#0c4fa6"/></linearGradient></defs>
<circle cx="1162" cy="1043.6" r="18" fill="url(#eg2)"/>
<path d="M1144,1043.6 A18,18 0 0 1 1180,1043.6 C1180,1048 1177,1051.4 1171.6,1051.4 C1167.4,1051.4 1164.6,1050 1163.6,1048.4 C1167,1047.4 1168.4,1045 1168.4,1042.6 C1168.4,1037.8 1164,1034.2 1157.8,1034.2 C1151.6,1034.2 1146,1038 1144,1043.6 Z" fill="url(#eg1)"/>
<path d="M1144.4,1046 C1146,1039.6 1151,1035.4 1157.6,1035.4 C1163,1035.4 1167.4,1038.6 1167.4,1042.6 C1167.4,1044.6 1166.4,1046.4 1163.6,1047.2 C1160.6,1047 1158.4,1045 1158.2,1042.6 C1153.6,1046.6 1153.4,1054 1159.6,1058.6 C1154,1059.6 1146.6,1055 1144.4,1046 Z" fill="#1565c4"/>
<path d="M1163.6,1048.4 C1166,1051 1170,1052 1174,1051.6 C1176.6,1051.2 1178.6,1050.2 1179.4,1049.2 C1178.8,1052.4 1177.4,1054.6 1175.6,1056.4 C1172,1055.4 1166.4,1053.6 1163.6,1048.4 Z" fill="#cfe5eb"/>
<circle cx="1162.6" cy="1042.6" r="3.4" fill="#cfe5eb"/>
<circle cx="1153" cy="1053" r="8.2" fill="#dad6d2" stroke="#cfe5eb" stroke-width="0.8"/><circle cx="1153" cy="1050.6" r="2.8" fill="#8e8a86"/><path d="M1147.6,1058.4 C1148,1055.4 1150.2,1054.4 1153,1054.4 C1155.8,1054.4 1158,1055.4 1158.4,1058.4 C1156.8,1060 1149.2,1060 1147.6,1058.4 Z" fill="#8e8a86"/>
<defs><linearGradient id="st" x1="0" y1="0" x2="1" y2="1"><stop offset="0" stop-color="#1a64b8"/><stop offset="1" stop-color="#1a3470"/></linearGradient></defs>
<path d="M1218.6,1031.4 V1028.8 C1218.6,1027.8 1219.2,1027.2 1220.2,1027.2 H1234.8 C1235.8,1027.2 1236.4,1027.8 1236.4,1028.8 V1031.4" fill="none" stroke="#30c0f8" stroke-width="1.6"/>
<path d="M1210.2,1032.4 C1210.2,1031.6 1210.8,1031 1211.6,1031 H1243.4 C1244.2,1031 1244.8,1031.6 1244.8,1032.4 V1057.8 C1244.8,1060 1243,1061.9 1240.8,1061.9 H1214.2 C1212,1061.9 1210.2,1060 1210.2,1057.8 Z" fill="url(#st)"/>
<rect x="1220" y="1038.9" width="6.8" height="6.8" fill="#f25022"/><rect x="1228" y="1038.9" width="7" height="6.8" fill="#7fba00"/><rect x="1220" y="1046.9" width="6.8" height="6.8" fill="#00a4ef"/><rect x="1228" y="1046.9" width="7" height="6.8" fill="#ffb900"/>
<defs><radialGradient id="ff1" cx="0.75" cy="0.15" r="0.95"><stop offset="0" stop-color="#fff44f"/><stop offset="0.35" stop-color="#ffa020"/><stop offset="0.7" stop-color="#ff4a30"/><stop offset="1" stop-color="#e31587"/></radialGradient>
<radialGradient id="ff2" cx="0.55" cy="0.3" r="0.8"><stop offset="0" stop-color="#b040f8"/><stop offset="1" stop-color="#5a3ad0"/></radialGradient></defs>
<path d="M1300,1027.6 C1306,1031 1310.6,1037 1310.6,1044.3 C1310.6,1053.6 1303.2,1060.8 1293.9,1060.8 C1284.6,1060.8 1277.2,1053.6 1277.2,1044.3 C1277.2,1039.6 1279,1035.4 1282,1032.4 L1284,1036 L1287,1033.4 C1290,1031.8 1294,1031.2 1297,1032 Z" fill="url(#ff1)"/>
<circle cx="1294.6" cy="1044.2" r="7.2" fill="url(#ff2)"/>
<path d="M1282,1040.4 C1285,1039 1289,1039.8 1293,1042 C1290,1042.4 1288,1043 1287,1044 C1285,1043 1283,1042 1282,1040.4 Z" fill="#ffb020"/>
<rect x="1332.2" y="1016" width="55.6" height="56.4" rx="5" fill="#e6f2f6" stroke="#c4d8de" stroke-width="0.8"/>
<defs><clipPath id="wc2"><rect x="1350" y="1027.9" width="27" height="32.1" rx="2.2"/></clipPath></defs>
<g clip-path="url(#wc2)"><rect x="1350" y="1027.9" width="28" height="8" fill="#41a5ee"/><rect x="1350" y="1035.9" width="28" height="8" fill="#2b7cd3"/><rect x="1350" y="1043.9" width="28" height="8" fill="#185abd"/><rect x="1350" y="1051.9" width="28" height="8.2" fill="#103f91"/></g>
<rect x="1342.6" y="1035.8" width="18.2" height="18" rx="1.8" fill="#0b3a8c" opacity="0.35"/>
<rect x="1342" y="1035.2" width="18" height="17.8" rx="1.8" fill="#185abd"/>
<path d="M1344,1038.8 H1346.6 L1348.3,1046.8 L1350.1,1038.8 H1352 L1353.8,1046.8 L1355.5,1038.8 H1358 L1355,1050 H1352.7 L1351,1042.8 L1349.4,1050 H1347 Z" fill="#fff"/>
<rect x="1092" y="1068" width="9" height="4.7" rx="2.35" fill="#768589"/>
<rect x="1158" y="1068" width="9" height="4.7" rx="2.35" fill="#768589"/>
<rect x="1290" y="1068" width="9" height="4.7" rx="2.35" fill="#768589"/>
<rect x="1348.2" y="1068.3" width="23.8" height="4.4" rx="2.2" fill="#1e7f8e"/>
<polyline points="1553.2,1047.4 1561,1039.8 1568.8,1047.4" fill="none" stroke="#1a1a1a" stroke-width="1.6"/>
<path d="M1600.6,1051.2 C1597,1051.2 1596.6,1045.2 1600.4,1043.6 C1601,1039.2 1604,1036.2 1608,1036.2 C1611,1036.2 1613.4,1038 1614.6,1040.6 C1618.6,1040.6 1620.8,1043.4 1620.8,1046.4 C1620.8,1049 1619,1051.2 1616.4,1051.2 Z" fill="#9a9a9a" stroke="#1a1a1a" stroke-width="1.3"/>
<path d="M1601,1050.4 L1608.6,1044.2 L1616.6,1050.4 Z" fill="#e6e6e6"/><path d="M1603.8,1040 C1605,1037.4 1611,1036.4 1614,1040.6 L1608.6,1044 Z" fill="#757575"/>
<path d="M1645.6,1041 A16,16 0 0 1 1668.2,1041 M1648.6,1044.4 A11.2,11.2 0 0 1 1665.2,1044.4 M1651.8,1047.6 A6.6,6.6 0 0 1 1662,1047.6" fill="none" stroke="#1a1a1a" stroke-width="1.5"/><circle cx="1656.9" cy="1050.4" r="1.7" fill="#1a1a1a"/>
<path d="M1681.8,1041.4 H1685.2 L1690.6,1036.4 V1051.6 L1685.2,1046.8 H1681.8 Z" fill="none" stroke="#1a1a1a" stroke-width="1.4" stroke-linejoin="round"/><path d="M1695.4,1040.4 L1703.2,1048 M1703.2,1040.4 L1695.4,1048" stroke="#1a1a1a" stroke-width="1.4"/>
<rect x="1718" y="1037.8" width="19.4" height="12.6" rx="2.4" fill="none" stroke="#1a1a1a" stroke-width="1.4"/><rect x="1738.2" y="1042" width="2.6" height="4.2" rx="1" fill="#1a1a1a"/><rect x="1719.9" y="1040.2" width="2.8" height="7.8" fill="#1a1a1a"/>
<ellipse cx="1877.5" cy="1043.8" rx="14.6" ry="12.4" fill="#1f6b78"/>
<text x="81.97" y="45.00" font-size="18.5" fill="#242424" font-weight="400" font-family='"Liberation Sans", sans-serif' textLength="76.82" lengthAdjust="spacingAndGlyphs" stroke="#e7eef1" stroke-width="0.25">AutoSave</text>
<text x="199.61" y="45.00" font-size="18.5" fill="#5c5c5c" font-weight="400" font-family='"Liberation Sans", sans-serif' textLength="22.27" lengthAdjust="spacingAndGlyphs" stroke="#ffffff" stroke-width="0.25">Off</text>
<text x="304.36" y="45.10" font-size="18.5" fill="#242424" font-weight="400" font-family='"Liberation Sans", sans-serif' textLength="311.57" lengthAdjust="spacingAndGlyphs" stroke="#e7eef1" stroke-width="0.25">Nutrition_LastName_FirstName • Saved</text>
<text x="788.55" y="46.50" font-size="19.5" fill="#616161" font-weight="400" font-family='"Liberation Sans", sans-serif' textLength="59.06" lengthAdjust="spacingAndGlyphs" stroke="#fafafa" stroke-width="0.25">Search</text>
<text x="1323.05" y="45.00" font-size="18.5" fill="#242424" font-weight="400" font-family='"Liberation Sans", sans-serif' textLength="230.81" lengthAdjust="spacingAndGlyphs" stroke="#e7eef1" stroke-width="0.25">HAMIDOU OUSSOUMANOU</text>
<text x="42.62" y="105.00" font-size="20" fill="#242424" font-weight="400" font-family='"Liberation Sans", sans-serif' textLength="31.04" lengthAdjust="spacingAndGlyphs" stroke="#e7eef1" stroke-width="0.25">File</text>
<text x="194.97" y="105.00" font-size="20" fill="#242424" font-weight="400" font-family='"Liberation Sans", sans-serif' textLength="48.17" lengthAdjust="spacingAndGlyphs" stroke="#e7eef1" stroke-width="0.25">Insert</text>
<text x="273.40" y="105.00" font-size="20" fill="#242424" font-weight="400" font-family='"Liberation Sans", sans-serif' textLength="45.55" lengthAdjust="spacingAndGlyphs" stroke="#e7eef1" stroke-width="0.25">Draw</text>
<text x="347.13" y="105.00" font-size="20" fill="#242424" font-weight="400" font-family='"Liberation Sans", sans-serif' textLength="61.66" lengthAdjust="spacingAndGlyphs" stroke="#e7eef1" stroke-width="0.25">Design</text>
<text x="437.13" y="105.00" font-size="20" fill="#242424" font-weight="400" font-family='"Liberation Sans", sans-serif' textLength="59.26" lengthAdjust="spacingAndGlyphs" stroke="#e7eef1" stroke-width="0.25">Layout</text>
<text x="527.26" y="105.00" font-size="20" fill="#242424" font-weight="400" font-family='"Liberation Sans", sans-serif' textLength="92.90" lengthAdjust="spacingAndGlyphs" stroke="#e7eef1" stroke-width="0.25">References</text>
<text x="650.80" y="105.00" font-size="20" fill="#242424" font-weight="400" font-family='"Liberation Sans", sans-serif' textLength="76.20" lengthAdjust="spacingAndGlyphs" stroke="#e7eef1" stroke-width="0.25">Mailings</text>
<text x="753.97" y="105.00" font-size="20" fill="#242424" font-weight="400" font-family='"Liberation Sans", sans-serif' textLength="60.98" lengthAdjust="spacingAndGlyphs" stroke="#e7eef1" stroke-width="0.25">Review</text>
<text x="845.42" y="105.00" font-size="20" fill="#242424" font-weight="400" font-family='"Liberation Sans", sans-serif' textLength="40.79" lengthAdjust="spacingAndGlyphs" stroke="#e7eef1" stroke-width="0.25">View</text>
<text x="914.55" y="105.00" font-size="20" fill="#242424" font-weight="400" font-family='"Liberation Sans", sans-serif' textLength="42.57" lengthAdjust="spacingAndGlyphs" stroke="#e7eef1" stroke-width="0.25">Help</text>
<text x="985.46" y="105.00" font-size="20" fill="#242424" font-weight="400" font-family='"Liberation Sans", sans-serif' textLength="69.19" lengthAdjust="spacingAndGlyphs" stroke="#e7eef1" stroke-width="0.25">Acrobat</text>
<text x="110.75" y="105.00" font-size="20" fill="#242424" font-weight="700" font-family='"Liberation Sans", sans-serif' textLength="56.25" lengthAdjust="spacingAndGlyphs" stroke="#e7eef1" stroke-width="0.5">Home</text>
<text x="1509.76" y="103.75" font-size="20" fill="#242424" font-weight="400" font-family='"Liberation Sans", sans-serif' textLength="94.70" lengthAdjust="spacingAndGlyphs" stroke="#ffffff" stroke-width="0.25">Comments</text>
<text x="1664.28" y="103.75" font-size="20" fill="#242424" font-weight="400" font-family='"Liberation Sans", sans-serif' textLength="64.07" lengthAdjust="spacingAndGlyphs" stroke="#ffffff" stroke-width="0.25">Editing</text>
<text x="1805.14" y="103.75" font-size="20" fill="#ffffff" font-weight="400" font-family='"Liberation Sans", sans-serif' textLength="50.71" lengthAdjust="spacingAndGlyphs">Share</text>
<text x="50.44" y="259.00" font-size="15" fill="#2c2c2c" font-weight="400" font-family='"Liberation Sans", sans-serif' textLength="38.99" lengthAdjust="spacingAndGlyphs" stroke="#ffffff" stroke-width="0.25">Undo</text>
<text x="128.89" y="259.00" font-size="15" fill="#2c2c2c" font-weight="400" font-family='"Liberation Sans", sans-serif' textLength="68.55" lengthAdjust="spacingAndGlyphs" stroke="#ffffff" stroke-width="0.25">Clipboard</text>
<text x="384.61" y="259.00" font-size="15" fill="#2c2c2c" font-weight="400" font-family='"Liberation Sans", sans-serif' textLength="31.40" lengthAdjust="spacingAndGlyphs" stroke="#ffffff" stroke-width="0.25">Font</text>
<text x="684.74" y="259.00" font-size="15" fill="#2c2c2c" font-weight="400" font-family='"Liberation Sans", sans-serif' textLength="71.50" lengthAdjust="spacingAndGlyphs" stroke="#ffffff" stroke-width="0.25">Paragraph</text>
<text x="887.14" y="259.00" font-size="15" fill="#2c2c2c" font-weight="400" font-family='"Liberation Sans", sans-serif' textLength="39.38" lengthAdjust="spacingAndGlyphs" stroke="#ffffff" stroke-width="0.25">Styles</text>
<text x="1121.27" y="259.00" font-size="15" fill="#2c2c2c" font-weight="400" font-family='"Liberation Sans", sans-serif' textLength="103.04" lengthAdjust="spacingAndGlyphs" stroke="#ffffff" stroke-width="0.25">Adobe Acrobat</text>
<text x="1326.74" y="259.00" font-size="15" fill="#2c2c2c" font-weight="400" font-family='"Liberation Sans", sans-serif' textLength="36.51" lengthAdjust="spacingAndGlyphs" stroke="#ffffff" stroke-width="0.25">Voice</text>
<text x="1406.79" y="259.00" font-size="15" fill="#2c2c2c" font-weight="400" font-family='"Liberation Sans", sans-serif' textLength="70.54" lengthAdjust="spacingAndGlyphs" stroke="#ffffff" stroke-width="0.25">Sensitivity</text>
<text x="1519.20" y="259.00" font-size="15" fill="#2c2c2c" font-weight="400" font-family='"Liberation Sans", sans-serif' textLength="41.47" lengthAdjust="spacingAndGlyphs" stroke="#ffffff" stroke-width="0.25">Editor</text>
<text x="134.65" y="200.50" font-size="18" fill="#242424" font-weight="400" font-family='"Liberation Sans", sans-serif' textLength="42.08" lengthAdjust="spacingAndGlyphs" stroke="#ffffff" stroke-width="0.25">Paste</text>
<text x="252.61" y="150.00" font-size="18.5" fill="#242424" font-weight="400" font-family='"Liberation Sans", sans-serif' textLength="97.04" lengthAdjust="spacingAndGlyphs" stroke="#ffffff" stroke-width="0.25">Courier New</text>
<text x="486.17" y="150.00" font-size="18.5" fill="#242424" font-weight="400" font-family='"Liberation Sans", sans-serif' textLength="33.96" lengthAdjust="spacingAndGlyphs" stroke="#ffffff" stroke-width="0.25">10.5</text>
<text x="896.95" y="198.80" font-size="18" fill="#242424" font-weight="400" font-family='"Liberation Sans", sans-serif' textLength="44.95" lengthAdjust="spacingAndGlyphs" stroke="#ffffff" stroke-width="0.25">Styles</text>
<text x="974.30" y="196.20" font-size="18" fill="#242424" font-weight="400" font-family='"Liberation Sans", sans-serif' textLength="55.77" lengthAdjust="spacingAndGlyphs" stroke="#ffffff" stroke-width="0.25">Editing</text>
<text x="1058.13" y="199.20" font-size="18" fill="#242424" font-weight="400" font-family='"Liberation Sans", sans-serif' textLength="135.74" lengthAdjust="spacingAndGlyphs" stroke="#ffffff" stroke-width="0.25">Create and Share</text>
<text x="1080.97" y="222.90" font-size="18" fill="#242424" font-weight="400" font-family='"Liberation Sans", sans-serif' textLength="91.14" lengthAdjust="spacingAndGlyphs" stroke="#ffffff" stroke-width="0.25">Adobe PDF</text>
<text x="1212.30" y="199.20" font-size="18" fill="#242424" font-weight="400" font-family='"Liberation Sans", sans-serif' textLength="63.52" lengthAdjust="spacingAndGlyphs" stroke="#ffffff" stroke-width="0.25">Request</text>
<text x="1202.20" y="222.90" font-size="18" fill="#242424" font-weight="400" font-family='"Liberation Sans", sans-serif' textLength="83.93" lengthAdjust="spacingAndGlyphs" stroke="#ffffff" stroke-width="0.25">Signatures</text>
<text x="1316.31" y="200.70" font-size="18" fill="#242424" font-weight="400" font-family='"Liberation Sans", sans-serif' textLength="56.50" lengthAdjust="spacingAndGlyphs" stroke="#ffffff" stroke-width="0.25">Dictate</text>
<text x="1403.01" y="199.10" font-size="18" fill="#bdbdbd" font-weight="400" font-family='"Liberation Sans", sans-serif' textLength="78.32" lengthAdjust="spacingAndGlyphs" stroke="#ffffff" stroke-width="0.25">Sensitivity</text>
<text x="1516.50" y="199.10" font-size="18" fill="#242424" font-weight="400" font-family='"Liberation Sans", sans-serif' textLength="47.80" lengthAdjust="spacingAndGlyphs" stroke="#ffffff" stroke-width="0.25">Editor</text>
<text x="19.98" y="985.00" font-size="15.5" fill="#2c2c2c" font-weight="400" font-family='"Liberation Sans", sans-serif' textLength="517.44" lengthAdjust="spacingAndGlyphs" stroke="#f3f3f3" stroke-width="0.25">Nutrition_LastName_FirstName: 33,201 characters (an approximate value).</text>
<text x="1388.60" y="984.70" font-size="15.5" fill="#2c2c2c" font-weight="400" font-family='"Liberation Sans", sans-serif' textLength="39.93" lengthAdjust="spacingAndGlyphs" stroke="#f3f3f3" stroke-width="0.25">Focus</text>
<text x="1839.11" y="984.70" font-size="15.5" fill="#2c2c2c" font-weight="400" font-family='"Liberation Sans", sans-serif' textLength="40.05" lengthAdjust="spacingAndGlyphs" stroke="#f3f3f3" stroke-width="0.25">100%</text>
<text x="76.51" y="1037.80" font-size="18" fill="#1a1a1a" font-weight="400" font-family='"Liberation Sans", sans-serif' textLength="35.86" lengthAdjust="spacingAndGlyphs" stroke="#cfe5eb" stroke-width="0.25">43°F</text>
<text x="75.98" y="1061.25" font-size="18" fill="#5a5a5a" font-weight="400" font-family='"Liberation Sans", sans-serif' textLength="56.56" lengthAdjust="spacingAndGlyphs" stroke="#cfe5eb" stroke-width="0.25">Cloudy</text>
<text x="653.60" y="1052.00" font-size="21" fill="#5c5c5c" font-weight="400" font-family='"Liberation Sans", sans-serif' textLength="62.68" lengthAdjust="spacingAndGlyphs" stroke="#eff7f9" stroke-width="0.25">Search</text>
<text x="1773.65" y="1037.50" font-size="17.5" fill="#1a1a1a" font-weight="400" font-family='"Liberation Sans", sans-serif' textLength="75.80" lengthAdjust="spacingAndGlyphs" stroke="#cfe5eb" stroke-width="0.25">11:01 PM</text>
<text x="1766.29" y="1061.25" font-size="17.5" fill="#1a1a1a" font-weight="400" font-family='"Liberation Sans", sans-serif' textLength="82.52" lengthAdjust="spacingAndGlyphs" stroke="#cfe5eb" stroke-width="0.25">3/28/2023</text>
<text x="261.58" y="188.00" font-size="21" fill="#363636" font-weight="700" font-family='"Liberation Sans", sans-serif' textLength="13.14" lengthAdjust="spacingAndGlyphs">B</text>
<text x="396.63" y="188.80" font-size="17.5" fill="#363636" font-weight="400" font-family='"Liberation Sans", sans-serif' textLength="20.13" lengthAdjust="spacingAndGlyphs">ab</text>
<text x="440.68" y="187.70" font-size="19" fill="#363636" font-weight="700" font-family='"Liberation Sans", sans-serif' textLength="9.85" lengthAdjust="spacingAndGlyphs">x</text>
<text x="451.43" y="193.75" font-size="10" fill="#1f8dd6" font-weight="700" font-family='"Liberation Sans", sans-serif' textLength="6.01" lengthAdjust="spacingAndGlyphs">2</text>
<text x="479.88" y="187.70" font-size="19" fill="#363636" font-weight="700" font-family='"Liberation Sans", sans-serif' textLength="9.85" lengthAdjust="spacingAndGlyphs">x</text>
<text x="490.41" y="177.70" font-size="10" fill="#1f8dd6" font-weight="700" font-family='"Liberation Sans", sans-serif' textLength="6.24" lengthAdjust="spacingAndGlyphs">2</text>
<text x="456.09" y="228.75" font-size="20" fill="#363636" font-weight="400" font-family='"Liberation Sans", sans-serif' textLength="9.31" lengthAdjust="spacingAndGlyphs">a</text>
<text x="667.30" y="137.20" font-size="10.5" fill="#1f8dd6" font-weight="700" font-family='"Liberation Sans", sans-serif' textLength="5.26" lengthAdjust="spacingAndGlyphs">1</text>
<text x="667.58" y="146.20" font-size="10.5" fill="#1f8dd6" font-weight="700" font-family='"Liberation Sans", sans-serif' textLength="5.08" lengthAdjust="spacingAndGlyphs">2</text>
<text x="667.70" y="155.20" font-size="10.5" fill="#1f8dd6" font-weight="700" font-family='"Liberation Sans", sans-serif' textLength="4.92" lengthAdjust="spacingAndGlyphs">3</text>
<text x="728.39" y="137.20" font-size="10.5" fill="#1f8dd6" font-weight="700" font-family='"Liberation Sans", sans-serif' textLength="4.54" lengthAdjust="spacingAndGlyphs">1</text>
<text x="732.50" y="146.20" font-size="10.5" fill="#1f8dd6" font-weight="700" font-family='"Liberation Sans", sans-serif' textLength="5.63" lengthAdjust="spacingAndGlyphs">a</text>
<text x="740.08" y="155.20" font-size="10.5" fill="#1f8dd6" font-weight="700" font-family='"Liberation Sans", sans-serif' textLength="3.64" lengthAdjust="spacingAndGlyphs">i</text>
<text x="733.03" y="219.50" font-size="13.5" fill="#1f8dd6" font-weight="700" font-family='"Liberation Sans", sans-serif' textLength="10.87" lengthAdjust="spacingAndGlyphs">A</text>
<text x="732.51" y="232.60" font-size="13.5" fill="#363636" font-weight="400" font-family='"Liberation Sans", sans-serif' textLength="9.48" lengthAdjust="spacingAndGlyphs">Z</text>
<text x="1869.83" y="1048.20" font-size="15" fill="#ffffff" font-weight="400" font-family='"Liberation Sans", sans-serif' textLength="15.76" lengthAdjust="spacingAndGlyphs">55</text>
</svg>
</body></html>
